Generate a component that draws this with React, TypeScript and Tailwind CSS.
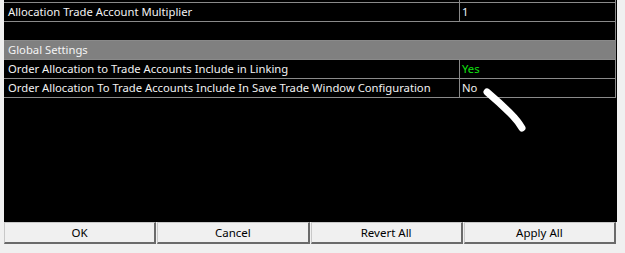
import React from "react";

const rows = [
  { label: "Allocation Trade Account Multiplier", value: "1", color: "text-[#e8f0ff]" },
];

function Row({ label, value, valueClass }: { label: string; value: string; valueClass: string }) {
  return (
    <div className="flex h-[19px] border-b border-[#8a8a8a]">
      <div className="w-[456px] border-r border-[#8a8a8a] pl-[4px] leading-[18px] text-[#f2f2f2] whitespace-nowrap">
        {label}
      </div>
      <div className={`flex-1 pl-[2px] leading-[18px] ${valueClass}`}>{value}</div>
    </div>
  );
}

export default function App() {
  const buttons = ["OK", "Cancel", "Revert All", "Apply All"];
  return (
    <div
      className="w-[625px] h-[253px] bg-[#f0f0f0] overflow-hidden text-[11.25px]"
      style={{ fontFamily: '"Noto Sans", "Open Sans", sans-serif' }}
    >
      <div className="relative ml-[4px] w-[613px] h-[222px] bg-black">
        <div className="w-[612px] border-r border-[#8a8a8a]">
          <div className="flex h-[3px] border-b border-[#8a8a8a]">
            <div className="w-[456px] border-r border-[#8a8a8a]" />
          </div>
          {rows.map((r) => (
            <Row key={r.label} label={r.label} value={r.value} valueClass={r.color} />
          ))}
          <div className="h-[19px] border-b border-[#8a8a8a]" />
          <div className="h-[19px] border-b border-[#8a8a8a] bg-[#808080] pl-[4px] leading-[18px] text-[#f4f4f4]">
            Global Settings
          </div>
          <Row
            label="Order Allocation to Trade Accounts Include in Linking"
            value="Yes"
            valueClass="text-[#10e010]"
          />
          <Row
            label="Order Allocation To Trade Accounts Include In Save Trade Window Configuration"
            value="No"
            valueClass="text-[#f2f2f2]"
          />
        </div>
        <svg className="absolute left-0 top-0" width="613" height="222" viewBox="0 0 613 222">
          <path
            d="M483 92 Q 496 103 506 113 Q 514 121 518 128"
            stroke="white"
            strokeWidth="7"
            strokeLinecap="round"
            fill="none"
          />
        </svg>
      </div>
      <div className="flex ml-[4px] w-[612px] h-[22px] gap-[1px]">
        {buttons.map((b) => (
          <button
            key={b}
            className="flex-1 h-[22px] bg-[#f0f0f0] border-t border-l border-[#c8c8c8] border-b-2 border-r-2 border-b-[#6a6a6a] border-r-[#6a6a6a] text-black text-[11.5px] leading-[18px] text-center"
          >
            {b}
          </button>
        ))}
      </div>
    </div>
  );
}
